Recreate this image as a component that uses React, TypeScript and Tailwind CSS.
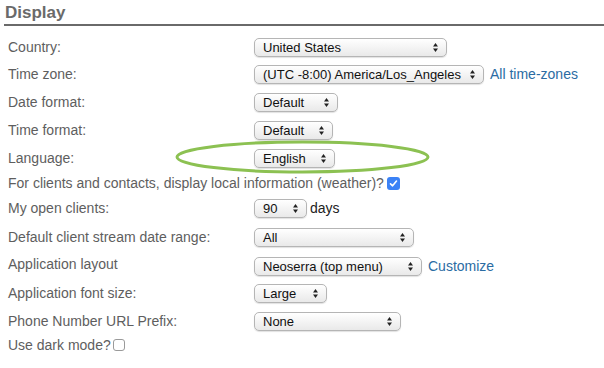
import type { ReactNode } from 'react'

function Arrows() {
  return (
    <svg width="7" height="11" viewBox="0 0 7 11" className="shrink-0">
      <path d="M3.5 1 L6 4.5 L1 4.5 Z" fill="#222" />
      <path d="M3.5 10 L6 6.5 L1 6.5 Z" fill="#222" />
    </svg>
  )
}

function Select({ value, width }: { value: string; width: string }) {
  return (
    <div
      className={`flex h-[19px] items-center justify-between rounded-[5px] border border-[#b5b5b5] bg-gradient-to-b from-[#ffffff] to-[#e9e9e9] pl-[8px] pr-[7px] text-[13px] leading-none text-[#111] shadow-[0_1px_1px_rgba(0,0,0,0.12)] ${width}`}
    >
      <span>{value}</span>
      <Arrows />
    </div>
  )
}

function Row({ label, height, children, top }: { label: ReactNode; height: string; children?: ReactNode; top?: boolean }) {
  return (
    <div className={`flex ${top ? 'items-start' : 'items-center'} ${height}`}>
      <div className={`w-[254px] shrink-0 pl-[8px] ${top ? 'pt-[3px]' : ''}`}>{label}</div>
      <div className={`flex items-center gap-[6px] ${top ? 'mt-[5px]' : ''}`}>{children}</div>
    </div>
  )
}

function Link({ children }: { children: ReactNode }) {
  return <span className="text-[14px] text-[#2b6ca3]">{children}</span>
}

export default function App() {
  return (
    <div
      className="relative h-[368px] w-[604px] overflow-hidden bg-white text-[14px] text-[#5e5e5e]"
      style={{ fontFamily: '"Liberation Sans", Arial, sans-serif' }}
    >
      <div className="ml-[4px] h-[33px]">
        <div className="pl-[1px] pt-[3px] text-[17px] font-bold leading-[20px] text-[#6a6a6a]">Display</div>
        <div className="mt-[1px] h-[2px] bg-[#6a6a6a]" />
      </div>

      <Row label="Country:" height="h-[28px]">
        <Select value="United States" width="w-[193px]" />
      </Row>
      <Row label="Time zone:" height="h-[27px]">
        <Select value="(UTC -8:00) America/Los_Angeles" width="w-[230px]" />
        <Link>All time-zones</Link>
      </Row>
      <Row label="Date format:" height="h-[28px]">
        <Select value="Default" width="w-[84px]" />
      </Row>
      <Row label="Time format:" height="h-[28px]">
        <Select value="Default" width="w-[79px]" />
      </Row>
      <Row label="Language:" height="h-[28px]">
        <Select value="English" width="w-[81px]" />
      </Row>
      <div className="flex h-[22px] items-center pl-[8px]">
        <span>For clients and contacts, display local information (weather)?</span>
        <span className="ml-[3px] flex h-[13px] w-[13px] items-center justify-center rounded-[3px] bg-[#3b82f6]">
          <svg width="9" height="9" viewBox="0 0 9 9">
            <path d="M1.5 4.8 L3.6 6.8 L7.5 2" fill="none" stroke="#fff" strokeWidth="1.6" strokeLinecap="round" strokeLinejoin="round" />
          </svg>
        </span>
      </div>
      <Row label="My open clients:" height="h-[29px]">
        <Select value="90" width="w-[53px]" />
        <span className="-ml-[3px] text-[#222]">days</span>
      </Row>
      <Row label="Default client stream date range:" height="h-[28px]">
        <Select value="All" width="w-[160px]" />
      </Row>
      <Row label="Application layout" height="h-[28px]" top>
        <Select value="Neoserra (top menu)" width="w-[168px]" />
        <Link>Customize</Link>
      </Row>
      <Row label="Application font size:" height="h-[28px]">
        <Select value="Large" width="w-[73px]" />
      </Row>
      <Row label="Phone Number URL Prefix:" height="h-[28px]">
        <Select value="None" width="w-[147px]" />
      </Row>
      <div className="flex h-[20px] items-center pl-[8px]">
        <span>Use dark mode?</span>
        <span className="ml-[2px] h-[12px] w-[12px] rounded-[3px] border border-[#9a9a9a] bg-white" />
      </div>

      <svg className="pointer-events-none absolute left-0 top-0" width="604" height="368">
        <ellipse cx="302.5" cy="157" rx="125.5" ry="15" fill="none" stroke="#8cc152" strokeWidth="3" />
      </svg>
    </div>
  )
}
